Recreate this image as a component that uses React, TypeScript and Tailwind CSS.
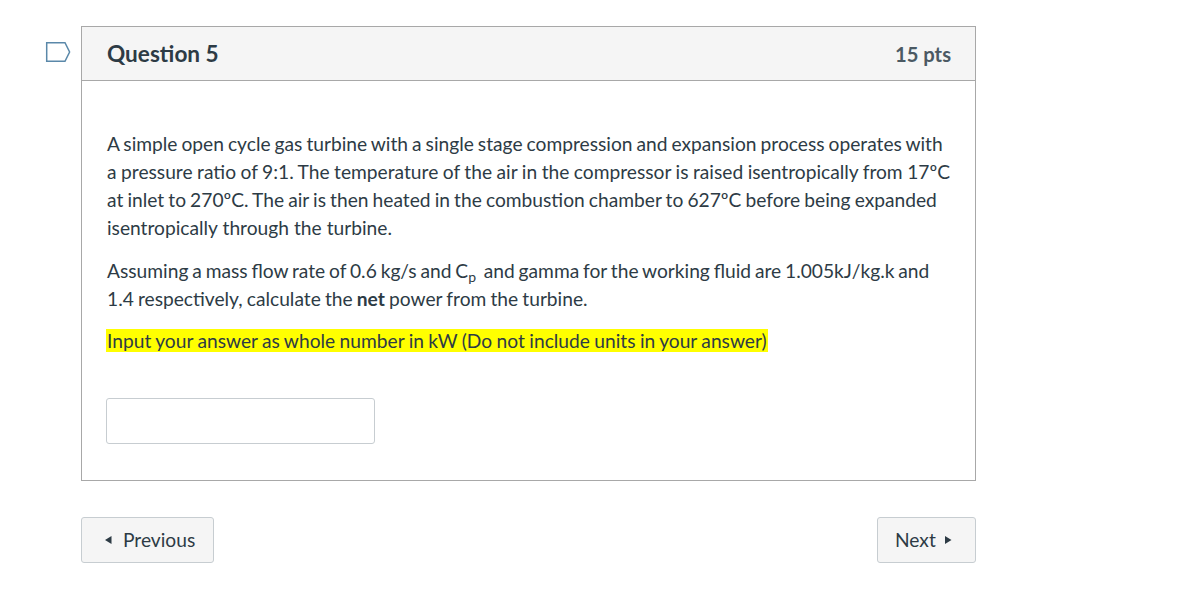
export default function App() {
  return (
    <div className="w-[1200px] h-[591px] bg-white overflow-hidden font-['Lato',sans-serif] text-[#2d3b45] pt-[26px] pl-[45px]">
      <div className="flex items-start w-[931px]">
        <div className="w-[36px] pt-[15px] shrink-0">
          <svg width="26" height="22" viewBox="0 0 26 22" className="block">
            <path d="M1.7 1.7 H20 L24.6 11 L20 20.3 H1.7 Z" fill="none" stroke="#5a88a9" strokeWidth="1.5" />
          </svg>
        </div>
        <div className="w-[895px]">
          <div className="border border-[#a8a8a8]">
            <div className="h-[54px] bg-[#f5f5f5] border-b border-[#a8a8a8] flex items-center justify-between pl-[25px] pr-[24px]">
              <span className="text-[22.6px] font-bold">Question 5</span>
              <span className="text-[20.2px] font-bold text-[#4b5963] mt-[2px]">15 pts</span>
            </div>
            <div className="pl-[25px] pr-[19px] pt-[49px] pb-[36px] text-[19.2px] leading-[28px] whitespace-nowrap">
              <p>
                <span className="block [word-spacing:-0.9px]">A simple open cycle gas turbine with a single stage compression and expansion process operates with</span>
                <span className="block [word-spacing:-0.4px]">a pressure ratio of 9:1. The temperature of the air in the compressor is raised isentropically from 17ºC</span>
                <span className="block [word-spacing:-0.8px]">at inlet to 270ºC. The air is then heated in the combustion chamber to 627ºC before being expanded</span>
                <span className="block [word-spacing:0.1px]">isentropically through the turbine.</span>
              </p>
              <p className="mt-[15px]">
                <span className="block [word-spacing:-1.05px]">Assuming a mass flow rate of 0.6 kg/s and C<sub className="text-[14px] leading-none">p</sub>&nbsp; and gamma for the working fluid are 1.005kJ/kg.k and</span>
                <span className="block [word-spacing:-0.77px]">1.4 respectively, calculate the <strong>net</strong> power from the turbine.</span>
              </p>
              <p className="mt-[14px] [word-spacing:-0.5px]"><span className="bg-[#ffff00] -ml-[1px] pl-[1px] pr-[1px]">Input your answer as whole number in kW (Do not include units in your answer)</span></p>
              <input type="text" aria-label="Answer" className="block mt-[43px] -ml-[1px] w-[269px] h-[46px] bg-white border border-[#c7cdd1] rounded-[3px]" />
            </div>
          </div>
          <div className="flex justify-between mt-[36px]">
            <button className="flex items-center h-[46px] w-[133px] pl-[23px] bg-[#f5f5f5] border border-[#c7cdd1] rounded-[3px] text-[19.2px]">
              <svg width="7" height="8" viewBox="0 0 7 8" className="mr-[11px]"><path d="M6.5 0 V8 L0 4 Z" fill="#2d3b45" /></svg>
              Previous
            </button>
            <button className="flex items-center h-[46px] w-[99px] pl-[17px] bg-[#f5f5f5] border border-[#c7cdd1] rounded-[3px] text-[19.2px]">
              Next
              <svg width="7" height="8" viewBox="0 0 7 8" className="ml-[9px]"><path d="M0 0 V8 L6.5 4 Z" fill="#2d3b45" /></svg>
            </button>
          </div>
        </div>
      </div>
    </div>
  );
}
